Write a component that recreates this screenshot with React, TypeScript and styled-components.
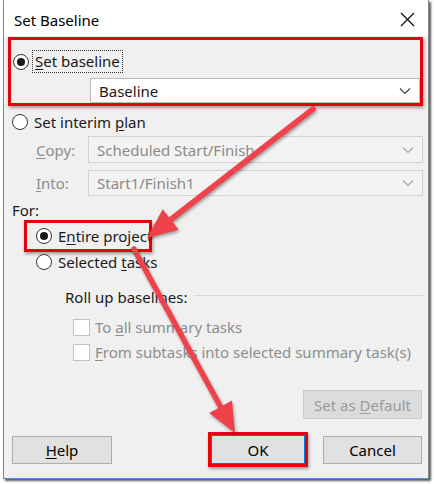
import styled, { createGlobalStyle } from "styled-components";

const GlobalStyle = createGlobalStyle`
  html, body {
    margin: 0;
    padding: 0;
    background: #ffffff;
  }
  body {
    font-family: "Noto Sans", "Open Sans", sans-serif;
    font-size: 15px;
    color: #1a1a1a;
  }
  * {
    box-sizing: border-box;
  }
`;

const Page = styled.div`
  position: relative;
  width: 434px;
  height: 484px;
  overflow: hidden;
`;

const Dialog = styled.div`
  margin-left: 3px;
  width: 426px;
  height: 479px;
  display: flex;
  flex-direction: column;
  border-left: 1px solid #4a90d9;
  border-right: 1px solid #8a8a8a;
  border-bottom: 1px solid #4a90d9;
  box-shadow: 2px 2px 2px rgba(0, 0, 0, 0.65);
  background: #f0f0f0;
`;

const TitleBar = styled.div`
  height: 36px;
  display: flex;
  align-items: center;
  justify-content: space-between;
  padding: 3px 13px 0 10px;
  background: #ffffff;
`;

const Title = styled.div`
  font-size: 15px;
  color: #000;
`;

const Body = styled.div`
  flex: 1;
  display: flex;
  flex-direction: column;
  padding: 1px 5px 0 4px;
`;

const Highlight = styled.div`
  border: 3px solid #e8000b;
  box-shadow: 1px 2px 3px rgba(0, 0, 0, 0.35);
`;

const BaselineBox = styled(Highlight)`
  height: 69px;
  display: flex;
  flex-direction: column;
  padding: 10px 0 0 2px;
`;

const Row = styled.div<{ $top?: number; $left?: number; $h?: number }>`
  display: flex;
  align-items: center;
  margin-top: ${(p) => p.$top ?? 0}px;
  margin-left: ${(p) => p.$left ?? 0}px;
  height: ${(p) => p.$h ?? 20}px;
  flex-shrink: 0;
`;

const RadioCircle = styled.span<{ $checked?: boolean }>`
  width: 16px;
  height: 16px;
  border-radius: 50%;
  border: 1px solid #333;
  background: #fff;
  display: inline-flex;
  align-items: center;
  justify-content: center;
  flex-shrink: 0;
  &::after {
    content: "";
    width: 8px;
    height: 8px;
    border-radius: 50%;
    background: ${(p) => (p.$checked ? "#1a1a1a" : "transparent")};
  }
`;

const Label = styled.span<{ $muted?: boolean; $gap?: number }>`
  margin-left: ${(p) => p.$gap ?? 5}px;
  color: ${(p) => (p.$muted ? "#8d8d8d" : "#1a1a1a")};
  white-space: nowrap;
  line-height: 20px;
`;

const FocusLabel = styled.span`
  margin-left: 3px;
  padding: 0 2px;
  border: 1px dotted #333;
  line-height: 21px;
  white-space: nowrap;
`;

const Select = styled.div<{ $disabled?: boolean; $h: number }>`
  flex: 1;
  height: ${(p) => p.$h}px;
  display: flex;
  align-items: center;
  justify-content: space-between;
  padding: 0 8px 0 8px;
  background: ${(p) => (p.$disabled ? "#f3f3f3" : "#ffffff")};
  border: 1px solid ${(p) => (p.$disabled ? "#d2d2d2" : "#b9b9b9")};
  color: ${(p) => (p.$disabled ? "#8a8a8a" : "#1a1a1a")};
  white-space: nowrap;
`;

const BaselineSelect = styled(Select)`
  margin: 5px 0 0 77px;
  flex: none;
`;

const FieldLabel = styled.span`
  width: 52px;
  color: #8d8d8d;
  flex-shrink: 0;
`;

const SectionLabel = styled.div<{ $top: number; $left: number }>`
  margin-top: ${(p) => p.$top}px;
  margin-left: ${(p) => p.$left}px;
  height: 18px;
  line-height: 18px;
  display: flex;
  align-items: center;
`;

const Rule = styled.span`
  flex: 1;
  height: 1px;
  background: #d6d6d6;
  margin: 0 0 3px 7px;
`;

const EntireBox = styled(Highlight)`
  margin: 1px 0 0 16px;
  width: 128px;
  height: 32px;
  display: flex;
  align-items: center;
  padding-left: 9px;
  overflow: hidden;
`;

const CheckBox = styled.span`
  width: 17px;
  height: 17px;
  border: 1px solid #c4c4c4;
  background: #fff;
  flex-shrink: 0;
`;

const DefaultButton = styled.div`
  margin: 28px 1px 0 auto;
  width: 119px;
  height: 29px;
  display: flex;
  align-items: center;
  justify-content: center;
  background: #dcdcdc;
  border: 1px solid #cbcbcb;
  color: #9a9a9a;
`;

const ButtonRow = styled.div`
  margin-top: 13px;
  height: 35px;
  display: flex;
  align-items: center;
`;

const Button = styled.div<{ $w: number }>`
  width: ${(p) => p.$w}px;
  height: 28px;
  display: flex;
  align-items: center;
  justify-content: center;
  background: #e1e1e1;
  border: 1px solid #adadad;
  color: #000;
`;

const OkFrame = styled(Highlight)`
  margin-left: auto;
  width: 100px;
  height: 35px;
  display: flex;
  align-items: center;
  justify-content: center;
`;

const OkButton = styled(Button)`
  border-color: #0078d7;
  height: 29px;
`;

const Overlay = styled.svg`
  position: absolute;
  top: 0;
  left: 0;
  pointer-events: none;
  filter: drop-shadow(1px 2px 1.5px rgba(0, 0, 0, 0.35));
`;

const Chevron = ({ muted }: { muted?: boolean }) => (
  <svg width="12" height="8" viewBox="0 0 12 8">
    <path
      d="M1 1.5 L6 6.5 L11 1.5"
      fill="none"
      stroke={muted ? "#a8a8a8" : "#444"}
      strokeWidth="1.2"
    />
  </svg>
);

const CloseIcon = () => (
  <svg width="15" height="15" viewBox="0 0 15 15">
    <path d="M1 1 L14 14 M14 1 L1 14" stroke="#111" strokeWidth="1.3" />
  </svg>
);

const Arrow = ({
  x1,
  y1,
  x2,
  y2,
}: {
  x1: number;
  y1: number;
  x2: number;
  y2: number;
}) => {
  const dx = x2 - x1;
  const dy = y2 - y1;
  const len = Math.hypot(dx, dy);
  const ux = dx / len;
  const uy = dy / len;
  const head = 30;
  const half = 13;
  const bx = x2 - ux * head;
  const by = y2 - uy * head;
  const pts = [
    `${x2},${y2}`,
    `${bx - uy * half},${by + ux * half}`,
    `${bx + uy * half},${by - ux * half}`,
  ].join(" ");
  return (
    <g>
      <line
        x1={x1}
        y1={y1}
        x2={bx + ux * 4}
        y2={by + uy * 4}
        stroke="#f0424b"
        strokeWidth="5.5"
        strokeLinecap="round"
      />
      <polygon points={pts} fill="#f0424b" />
    </g>
  );
};

const U = styled.span`
  text-decoration: underline;
  text-underline-offset: 2px;
`;

export default function App() {
  return (
    <Page>
      <GlobalStyle />
      <Dialog>
        <TitleBar>
          <Title>Set Baseline</Title>
          <CloseIcon />
        </TitleBar>
        <Body>
          <BaselineBox>
            <Row $h={23}>
              <RadioCircle $checked />
              <FocusLabel>
                <U>S</U>et baseline
              </FocusLabel>
            </Row>
            <BaselineSelect $h={25}>
              <span>Baseline</span>
              <Chevron />
            </BaselineSelect>
          </BaselineBox>

          <Row $top={6} $left={4}>
            <RadioCircle />
            <Label $gap={6}>
              Set interim <U>p</U>lan
            </Label>
          </Row>

          <Row $top={4} $left={28} $h={27}>
            <FieldLabel>
              <U>C</U>opy:
            </FieldLabel>
            <Select $disabled $h={27}>
              <span>Scheduled Start/Finish</span>
              <Chevron muted />
            </Select>
          </Row>
          <Row $top={7} $left={28} $h={26}>
            <FieldLabel>
              <U>I</U>nto:
            </FieldLabel>
            <Select $disabled $h={26}>
              <span>Start1/Finish1</span>
              <Chevron muted />
            </Select>
          </Row>

          <SectionLabel $top={5} $left={4}>
            For:
          </SectionLabel>

          <EntireBox>
            <RadioCircle $checked />
            <Label $gap={6}>
              E<U>n</U>tire project
            </Label>
          </EntireBox>
          <Row $left={28}>
            <RadioCircle />
            <Label $gap={6}>
              Selected <U>t</U>asks
            </Label>
          </Row>

          <SectionLabel $top={16} $left={57}>
            Roll up baselines:
            <Rule />
          </SectionLabel>

          <Row $top={11} $left={65}>
            <CheckBox />
            <Label $muted $gap={5}>
              To <U>a</U>ll summary tasks
            </Label>
          </Row>
          <Row $top={5} $left={65}>
            <CheckBox />
            <Label $muted $gap={5}>
              <U>F</U>rom subtasks into selected summary task(s)
            </Label>
          </Row>

          <DefaultButton>
            Set as&nbsp;<U>D</U>efault
          </DefaultButton>

          <ButtonRow>
            <Button $w={100} style={{ marginLeft: 4 }}>
              <span>
                <U>H</U>elp
              </span>
            </Button>
            <OkFrame>
              <OkButton $w={94}>OK</OkButton>
            </OkFrame>
            <Button $w={99} style={{ marginLeft: 15, marginRight: 1 }}>
              Cancel
            </Button>
          </ButtonRow>
        </Body>
      </Dialog>
      <Overlay width="434" height="484" viewBox="0 0 434 484">
        <Arrow x1={313} y1={109} x2={147} y2={238} />
        <Arrow x1={134} y1={249} x2={235} y2={433} />
      </Overlay>
    </Page>
  );
}
